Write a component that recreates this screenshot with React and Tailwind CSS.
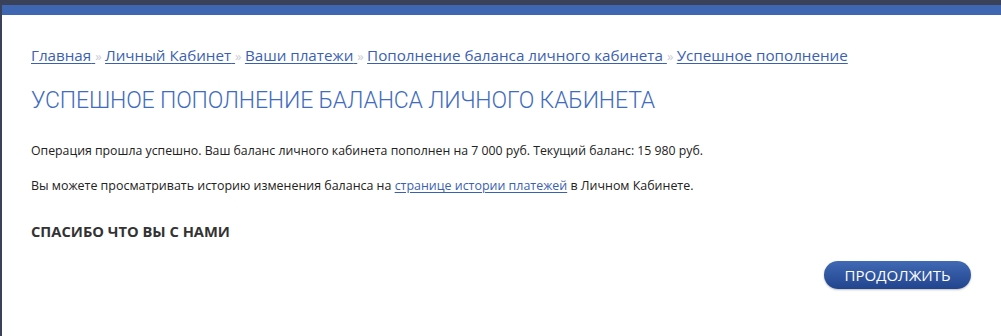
import React from "react";

const crumbs = [
    "Главная",
    "Личный Кабинет",
    "Ваши платежи",
    "Пополнение баланса личного кабинета",
];

const App = () => {
    return (
        <div className="w-[1001px] h-[336px] bg-[#3a4259] pl-[2px] pt-[5px] overflow-hidden" style={{ fontFamily: "'Open Sans', 'Noto Sans', sans-serif" }}>
            {/* top accent bar */}
            <div className="h-[10px] bg-[#3f67b1]" />

            {/* main white panel */}
            <div className="h-full bg-white pl-[29px] pr-[29px] pt-[30px]">
                {/* breadcrumbs */}
                <nav className="text-[15.2px] leading-[20px] text-[#3b5fb3] whitespace-nowrap">
                    {crumbs.map((c) => (
                        <span key={c}>
                            <a href="#" className="underline underline-offset-2">{c} </a>
                            <span className="text-[#c9cdd6] text-[13px]"> » </span>
                        </span>
                    ))}
                    <a href="#" className="underline underline-offset-2">Успешное пополнение</a>
                </nav>

                <h1 className="mt-[20px] text-[23px] leading-[30px] font-light tracking-[-0.15px] text-[#3f6cc0] font-['Roboto',sans-serif]">
                    УСПЕШНОЕ ПОПОЛНЕНИЕ БАЛАНСА ЛИЧНОГО КАБИНЕТА
                </h1>

                <p className="mt-[26px] text-[12.3px] leading-[18px] text-[#222]">
                    Операция прошла успешно. Ваш баланс личного кабинета пополнен на 7 000 руб. Текущий баланс: 15 980 руб.
                </p>
                <p className="mt-[17px] text-[12.45px] leading-[18px] text-[#222]">
                    Вы можете просматривать историю изменения баланса на{" "}
                    <a href="#" className="text-[#3b5fb3] underline underline-offset-2">странице истории платежей</a>{" "}
                    в Личном Кабинете.
                </p>

                <h3 className="mt-[26px] text-[14.7px] leading-[20px] font-bold text-[#333]">
                    СПАСИБО ЧТО ВЫ С НАМИ
                </h3>

                <div className="mt-[20px] flex justify-end pr-[1px]">
                    <button className="w-[147px] h-[28px] rounded-full bg-gradient-to-b from-[#4169b4] to-[#22448e] text-white text-[15px] leading-[28px] shadow-[0_1px_2px_rgba(0,0,0,0.25)]">
                        ПРОДОЛЖИТЬ
                    </button>
                </div>
            </div>
        </div>
    );
};

export default App;
